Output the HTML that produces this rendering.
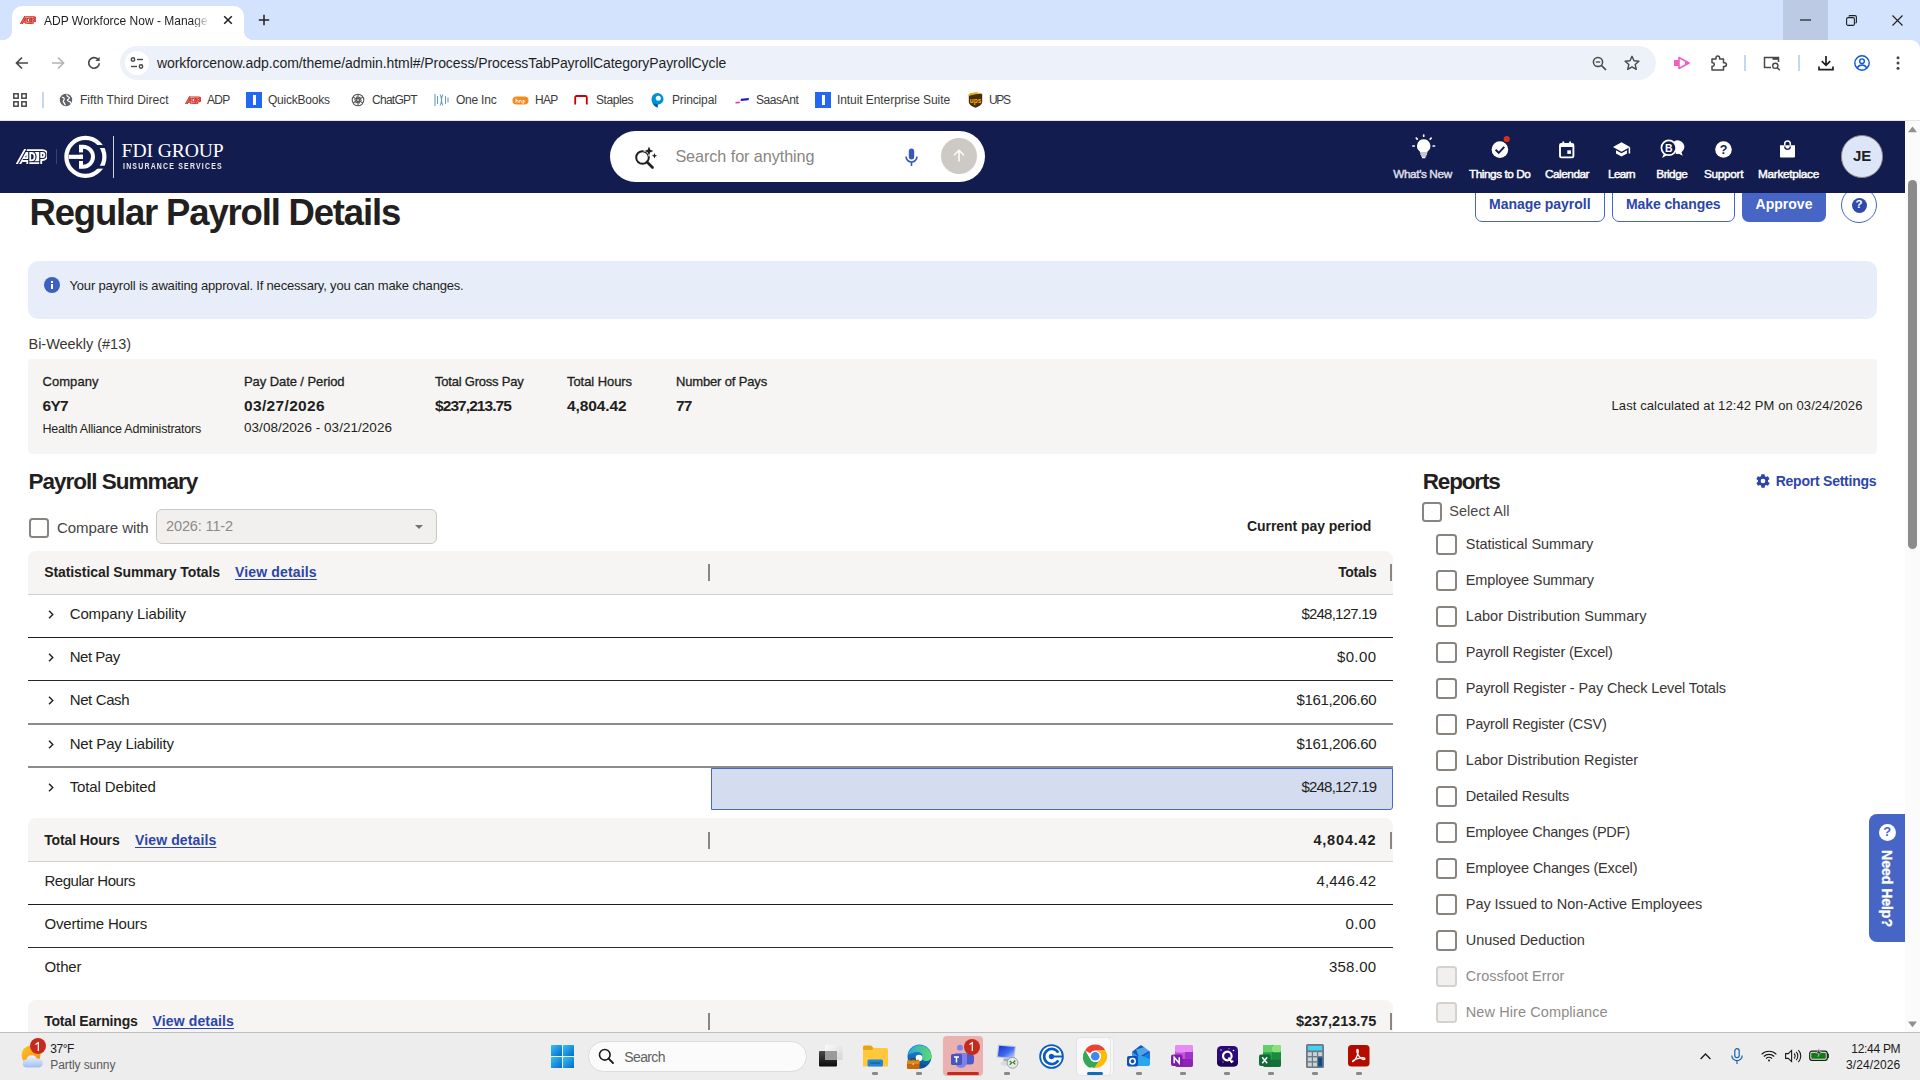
<!DOCTYPE html>
<html lang="en">
<head>
<meta charset="utf-8">
<title>ADP Workforce Now - Manage</title>
<style>
*{box-sizing:border-box;margin:0;padding:0}
html,body{width:1920px;height:1080px;overflow:hidden;background:#fff;font-family:"Liberation Sans",sans-serif;color:#1f1f1f}
.a{position:absolute}
.t{position:absolute;white-space:nowrap;line-height:1}
svg{position:absolute;overflow:visible}
/* ---------- chrome ---------- */
#tabbar{left:0;top:0;width:1920px;height:52px;background:#d3e3fd}
#tab{left:12px;top:6px;width:232px;height:34px;background:#fff;border-radius:10px 10px 0 0}
#tab:before,#tab:after{content:"";position:absolute;bottom:0;width:10px;height:10px}
#tab:before{left:-10px;background:radial-gradient(circle at 0 0,transparent 10px,#fff 10.5px)}
#tab:after{right:-10px;background:radial-gradient(circle at 100% 0,transparent 10px,#fff 10.5px)}
#minhl{left:1783px;top:0;width:45px;height:40px;background:#bccbe3}
#toolbar{left:0;top:40px;width:1920px;height:46px;background:#fff;border-radius:0 9px 0 0}
#url{left:120px;top:46px;width:1536px;height:34px;border-radius:17px;background:#edf2fa}
#bm{left:0;top:86px;width:1920px;height:35px;background:#fff;border-bottom:1px solid #e4e4e4}
.bmt{font-size:12px;color:#3b3b3b;top:94px}
/* ---------- adp header ---------- */
#hd{left:0;top:121px;width:1905px;height:72px;background:#121c4e}
.nav{font-size:11.5px;color:#fff;top:168px;font-weight:bold;letter-spacing:-.2px}
/* ---------- page ---------- */
#page{left:0;top:193px;width:1905px;height:839px;background:#fff;overflow:hidden}
#sb{left:1905px;top:121px;width:15px;height:911px;background:#fbfbfb}
/* ---------- taskbar ---------- */
#tb{left:0;top:1032px;width:1920px;height:48px;background:#ededed;border-top:1px solid #bebebe}
</style>
</head>
<body>
<!-- TABBAR -->
<div class="a" id="tabbar"></div>
<div class="a" id="minhl"></div>
<div class="a" id="tab"></div>
<!-- tab favicon ADP -->
<svg style="left:19.9px;top:15.8px;overflow:hidden" width="16.3" height="8.3" viewBox="0 0 126 61"><g fill="none" stroke-linejoin="round"><path d="M5 69L43 1M40 10H100M51 10V60M27 42H51M51 10H62C86 10 86 51 62 51H51M51 51H95M95 10V64M95 10H106C124 10 124 38 106 38H95" stroke="#d0271d" stroke-width="19"/><path d="M5 69L43 1M40 10H100M51 10V60M27 42H51M51 10H62C86 10 86 51 62 51H51M51 51H95M95 10V64M95 10H106C124 10 124 38 106 38H95" stroke="#fff" stroke-width="3.500" opacity=".75"/></g></svg>
<div class="t" style="left:44px;top:15px;font-size:12px;color:#1f1f1f;width:166px;overflow:hidden;-webkit-mask-image:linear-gradient(90deg,#000 148px,transparent 166px)">ADP Workforce Now - Manage pa</div>
<svg style="left:223px;top:15px" width="10" height="10" viewBox="0 0 10 10"><path d="M1.2 1.2l7.6 7.6M8.8 1.2L1.200 8.800" stroke="#1f1f1f" stroke-width="1.5" fill="none"/></svg>
<svg style="left:258px;top:14px" width="12" height="12" viewBox="0 0 12 12"><path d="M6 .8v10.400M.8 6h10.400" stroke="#1f1f1f" stroke-width="1.500" fill="none"/></svg>
<!-- window controls -->
<svg style="left:1800px;top:19px" width="11" height="2" viewBox="0 0 11 2"><path d="M0 1h11" stroke="#1f1f1f" stroke-width="1.200"/></svg>
<svg style="left:1846px;top:15px" width="11" height="11" viewBox="0 0 11 11"><rect x=".6" y="2.600" width="7.800" height="7.800" rx="1.500" fill="none" stroke="#1f1f1f" stroke-width="1.100"/><path d="M3 1.600V1.500Q3 .6 4 .6h5q1.400 0 1.400 1.400v5q0 1-1 1" fill="none" stroke="#1f1f1f" stroke-width="1.100"/></svg>
<svg style="left:1892px;top:15px" width="11" height="11" viewBox="0 0 11 11"><path d="M.5.5l10 10M10.500.5l-10 10" stroke="#1f1f1f" stroke-width="1.100" fill="none"/></svg>
<!-- TOOLBAR -->
<div class="a" id="toolbar"></div>
<svg style="left:15px;top:56px" width="14" height="14" viewBox="0 0 14 14"><path d="M13 7H2M7 1.500L1.500 7 7 12.500" stroke="#474747" stroke-width="1.700" fill="none"/></svg>
<svg style="left:51px;top:56px" width="14" height="14" viewBox="0 0 14 14"><path d="M1 7h11M7 1.500L12.500 7 7 12.500" stroke="#b4b4b4" stroke-width="1.700" fill="none"/></svg>
<svg style="left:87px;top:56px" width="14" height="14" viewBox="0 0 14 14"><path d="M12.300 7.300A5.300 5.300 0 1 1 10.800 3.200" stroke="#474747" stroke-width="1.700" fill="none"/><path d="M12.600.8v4.200H8.400z" fill="#474747"/></svg>
<div class="a" id="url"></div>
<div class="a" style="left:125px;top:51px;width:24px;height:24px;border-radius:12px;background:#fff"></div>
<svg style="left:130px;top:57px" width="14" height="12" viewBox="0 0 14 12"><circle cx="3" cy="2.500" r="1.700" fill="none" stroke="#474747" stroke-width="1.400"/><path d="M7 2.500h6" stroke="#474747" stroke-width="1.400"/><circle cx="11" cy="9.500" r="1.700" fill="none" stroke="#474747" stroke-width="1.400"/><path d="M1 9.500h6" stroke="#474747" stroke-width="1.400"/></svg>
<div class="t" style="left:157px;top:56px;font-size:14px;color:#1f1f1f;letter-spacing:-.07px">workforcenow.adp.com/theme/admin.html#/Process/ProcessTabPayrollCategoryPayrollCycle</div>
<!-- toolbar right icons -->
<svg style="left:1592px;top:56px" width="15" height="15" viewBox="0 0 15 15"><circle cx="6" cy="6" r="4.600" fill="none" stroke="#474747" stroke-width="1.500"/><path d="M9.500 9.500l4.500 4.500" stroke="#474747" stroke-width="1.700"/><path d="M3.800 6h4.400" stroke="#474747" stroke-width="1.300"/></svg>
<svg style="left:1624px;top:55px" width="16" height="16" viewBox="0 0 16 16"><path d="M8 1.300l2 4.500 4.900.5-3.700 3.300 1.100 4.800L8 11.900l-4.300 2.500 1.100-4.800L1.100 6.300 6 5.800z" fill="none" stroke="#474747" stroke-width="1.400" stroke-linejoin="round"/></svg>
<svg style="left:1673px;top:56px" width="18" height="14" viewBox="0 0 18 14"><rect x="1" y="4" width="5" height="6" fill="#f25fc0"/><path d="M6 1.500l10 5.500L6 12.500z" fill="none" stroke="#f25fc0" stroke-width="1.600" stroke-linejoin="round"/><path d="M12 4.800L16.500 7 12 9.200z" fill="#f25fc0"/></svg>
<svg style="left:1710px;top:54px" width="17" height="17" viewBox="0 0 17 17"><path d="M2 5h4V3.800a1.800 1.800 0 0 1 3.600 0V5h3.900v3.700h1a1.900 1.900 0 0 1 0 3.800h-1V16H2v-3.800h.6a1.700 1.700 0 0 0 0-3.400H2z" fill="none" stroke="#474747" stroke-width="1.500" stroke-linejoin="round"/></svg>
<div class="a" style="left:1744px;top:55px;width:2px;height:16px;background:#c7d7f3"></div>
<svg style="left:1763px;top:55px" width="18" height="16" viewBox="0 0 18 16"><path d="M8 12.500H1.500v-10h14V7" fill="none" stroke="#474747" stroke-width="1.500"/><rect x="9.500" y="2" width="6.500" height="2.800" fill="#474747"/><circle cx="12.300" cy="10.800" r="2.600" fill="none" stroke="#474747" stroke-width="1.400"/><path d="M14.200 12.700l2.600 2.600" stroke="#474747" stroke-width="1.500"/></svg>
<div class="a" style="left:1798px;top:55px;width:2px;height:16px;background:#c7d7f3"></div>
<svg style="left:1818px;top:55px" width="16" height="16" viewBox="0 0 16 16"><path d="M8 1v9M3.800 6.200L8 10.400l4.200-4.200" fill="none" stroke="#1f1f1f" stroke-width="1.700"/><path d="M1 11.500v3.200h14v-3.200" fill="none" stroke="#1f1f1f" stroke-width="1.700"/></svg>
<svg style="left:1854px;top:55px" width="16" height="16" viewBox="0 0 16 16"><circle cx="8" cy="8" r="7.200" fill="none" stroke="#0b57d0" stroke-width="1.400"/><circle cx="8" cy="6.200" r="2.300" fill="none" stroke="#0b57d0" stroke-width="1.400"/><path d="M3.300 12.900c1.200-2.200 3-2.900 4.700-2.900s3.500.7 4.700 2.900" fill="none" stroke="#0b57d0" stroke-width="1.400"/></svg>
<svg style="left:1896px;top:56px" width="4" height="14" viewBox="0 0 4 14"><circle cx="2" cy="1.800" r="1.500" fill="#474747"/><circle cx="2" cy="7" r="1.500" fill="#474747"/><circle cx="2" cy="12.200" r="1.500" fill="#474747"/></svg>
<!-- BOOKMARKS -->
<div class="a" id="bm"></div>
<svg style="left:13px;top:93px" width="14" height="14" viewBox="0 0 14 14"><g fill="none" stroke="#474747" stroke-width="1.500"><rect x=".8" y=".8" width="4.400" height="4.400"/><rect x="8.800" y=".8" width="4.400" height="4.400"/><rect x=".8" y="8.800" width="4.400" height="4.400"/><rect x="8.800" y="8.800" width="4.400" height="4.400"/></g></svg>
<div class="a" style="left:42px;top:92px;width:2px;height:16px;background:#c7d7f3"></div>
<svg style="left:59px;top:93px" width="14" height="14" viewBox="0 0 14 14"><circle cx="7" cy="7" r="6.200" fill="#5f6368"/><path d="M3 4.500c1.500-.5 2.500.5 2.200 1.800S3.500 8 4.500 9s1 2.500 2.200 2.800M8 1.500c-.5 1.500.5 2 1.800 2.500s.2 2-1 2.500.5 2 1.500 2 1.500 1 1 2" stroke="#fff" stroke-width="1.200" fill="none"/></svg>
<div class="t bmt" style="left:80px;letter-spacing:0px">Fifth Third Direct</div>
<svg style="left:185px;top:95.8px;overflow:hidden" width="16" height="8.4" viewBox="0 0 126 61"><g fill="none" stroke-linejoin="round"><path d="M5 69L43 1M40 10H100M51 10V60M27 42H51M51 10H62C86 10 86 51 62 51H51M51 51H95M95 10V64M95 10H106C124 10 124 38 106 38H95" stroke="#d0271d" stroke-width="19"/><path d="M5 69L43 1M40 10H100M51 10V60M27 42H51M51 10H62C86 10 86 51 62 51H51M51 51H95M95 10V64M95 10H106C124 10 124 38 106 38H95" stroke="#fff" stroke-width="3.500" opacity=".75"/></g></svg>
<div class="t bmt" style="left:207px;letter-spacing:-0.66px">ADP</div>
<div class="a" style="left:246px;top:92px;width:16px;height:16px;background:#2368f0"></div><div class="a" style="left:252.500px;top:95px;width:3px;height:10px;background:#fff"></div>
<div class="t bmt" style="left:268px;letter-spacing:-0.23px">QuickBooks</div>
<svg style="left:351px;top:93px" width="14" height="14" viewBox="0 0 14 14"><g fill="none" stroke="#555" stroke-width="1.100"><circle cx="7" cy="7" r="5.800"/><path d="M7 1.200v4.300l3.700 2.100M12 4.100L8.300 6.200v4.300M12 9.900L8.300 7.800 4.600 9.900M7 12.800V8.500L3.300 6.400M2 9.900l3.700-2.100V3.500M2 4.100l3.700 2.100 3.700-2.100"/></g></svg>
<div class="t bmt" style="left:372px;letter-spacing:-0.72px">ChatGPT</div>
<svg style="left:434px;top:93px" width="15" height="14" viewBox="0 0 15 14"><g stroke="#6a9cc0" stroke-width="1.100" fill="none"><path d="M1 1v12M3.500 3v8M6 1.500c2 3 2 8 0 11M9 1.500c-2 3-2 8 0 11M11.500 3v8M14 4.500v5"/></g></svg>
<div class="t bmt" style="left:456px;letter-spacing:-0.23px">One Inc</div>
<svg style="left:512px;top:96px" width="17" height="9" viewBox="0 0 17 9"><rect x=".5" y=".5" width="16" height="8" rx="4" fill="#f58a1f"/><path d="M4 2.500v4M4 4.800c.8-1 2-.6 2 .4v1.300M8 6.500c-1.300 0-1.300-2.200.2-2.200 1 0 1.200.8 1.200 2.200M11 4.300v4M11 4.800c1.600-1.200 2.800 1.600 0 1.600" stroke="#fff" stroke-width=".9" fill="none"/></svg>
<div class="t bmt" style="left:535px;letter-spacing:-0.76px">HAP</div>
<svg style="left:574px;top:95px" width="14" height="10" viewBox="0 0 14 10"><path d="M1.200 9.500V2.500Q1.200 1 2.700 1h8.600q1.500 0 1.500 1.500v7" fill="none" stroke="#cc0000" stroke-width="1.800"/></svg>
<div class="t bmt" style="left:596px;letter-spacing:-0.43px">Staples</div>
<svg style="left:650px;top:92px" width="15" height="16" viewBox="0 0 15 16"><path d="M7.500 1A6 6 0 0 1 13.500 7c0 3.300-2.700 5.500-5.800 5.500V15.500C4 14.500 1.500 11 1.500 7A6 6 0 0 1 7.500 1z" fill="#0091da"/><circle cx="8.300" cy="6.300" r="2.500" fill="#fff"/><path d="M3 11c1 2.500 2.500 4 4.700 4.500V12c-2 0-3.700-.3-4.700-1z" fill="#0061a0"/></svg>
<div class="t bmt" style="left:672px;letter-spacing:-0.15px">Principal</div>
<svg style="left:735px;top:97px" width="15" height="7" viewBox="0 0 15 7"><path d="M6 1.800l8-.8-.5 2.300-8 .8z" fill="#1d1bb0"/><path d="M.5 5l4.500-.5-.4 1.800L.5 6.500z" fill="#e72fb0"/></svg>
<div class="t bmt" style="left:756px;letter-spacing:-0.44px">SaasAnt</div>
<div class="a" style="left:815px;top:92px;width:16px;height:16px;background:#2368f0"></div><div class="a" style="left:821.500px;top:95px;width:3px;height:10px;background:#fff"></div>
<div class="t bmt" style="left:837px;letter-spacing:-0.075px">Intuit Enterprise Suite</div>
<svg style="left:968px;top:92px" width="15" height="16" viewBox="0 0 15 16"><path d="M.8 2.200C5 .3 10 .3 14.200 2.200V9.500c0 3.300-3.200 5-6.700 6.200C4 14.500.8 12.800.8 9.500z" fill="#4a2c0f"/><path d="M.8 4c4-1.800 9-2 13.400-2.200V2.200C10 .3 5 .3.8 2.200z" fill="#f6b500"/><text x="7.500" y="11" font-family="Liberation Sans" font-weight="bold" font-size="6.500" fill="#f6b500" text-anchor="middle">ups</text></svg>
<div class="t bmt" style="left:989px;letter-spacing:-1.3px">UPS</div>
<!-- ADP HEADER -->
<div class="a" id="hd"></div>
<svg style="left:15.500px;top:148.750px;overflow:hidden" width="31.500" height="15.250" viewBox="0 0 126 61"><g fill="none" stroke-linejoin="round"><path d="M5 69L43 1M40 10H100M51 10V60M27 42H51M51 10H62C86 10 86 51 62 51H51M51 51H95M95 10V64M95 10H106C124 10 124 38 106 38H95" stroke="#fff" stroke-width="19"/><path d="M5 69L43 1M40 10H100M51 10V60M27 42H51M51 10H62C86 10 86 51 62 51H51M51 51H95M95 10V64M95 10H106C124 10 124 38 106 38H95" stroke="#121c4e" stroke-width="4.500"/></g></svg>
<div class="a" style="left:56px;top:149px;width:1px;height:15px;background:#3a436f"></div>
<svg style="left:64px;top:135px" width="43" height="44" viewBox="64 135 43 44"><circle cx="85.400" cy="156.900" r="19" fill="none" stroke="#fff" stroke-width="4.200"/><rect x="96" y="145" width="12" height="3" fill="#121c4e"/><rect x="96" y="165.750" width="12" height="2.900" fill="#121c4e"/><path fill="#fff" fill-rule="evenodd" d="M79 144.750H83A12 12 0 0 1 83 168.750H79z M83 148.750A8 8 0 0 1 83 164.750z"/><rect x="78.500" y="152.400" width="5" height="2.350" fill="#121c4e"/><rect x="78.500" y="158.900" width="5" height="2.100" fill="#121c4e"/><rect x="68.750" y="154.750" width="14.250" height="4.150" fill="#fff"/></svg>
<div class="a" style="left:113px;top:136px;width:1px;height:42px;background:#cfd1de"></div>
<div class="t" style="top:140.70px;font-size:19.6px;left:121.60px;letter-spacing:-0.102px;color:#fff;font-family:'Liberation Serif',serif;">FDI GROUP</div>
<div class="t" style="top:162.15px;font-size:8.7px;left:122.50px;letter-spacing:1.501px;font-weight:bold;color:#e8e9f0;transform:scaleX(.8);transform-origin:0 0;">INSURANCE SERVICES</div>
<div class="a" style="left:610px;top:131px;width:375px;height:51px;border-radius:26px;background:#fff"></div>
<svg style="left:634px;top:146px" width="24" height="24" viewBox="0 0 24 24"><circle cx="8.500" cy="11.500" r="6.300" fill="none" stroke="#231f20" stroke-width="2"/><path d="M13 16l5.500 5.500" stroke="#231f20" stroke-width="2.600" stroke-linecap="round"/><path d="M15 .5l1.300 3.200 3.200 1.300-3.200 1.300L15 9.500l-1.300-3.200L10.500 5l3.200-1.300z" fill="#231f20" stroke="#fff" stroke-width="1.200" paint-order="stroke"/><path d="M20.500 7l.8 1.900 1.900.8-1.900.8-.8 1.900-.8-1.900-1.900-.8 1.900-.8z" fill="#231f20"/></svg>
<div class="t" style="top:148.40px;font-size:16.2px;left:675.40px;letter-spacing:-0.068px;color:#8a8580;">Search for anything</div>
<svg style="left:905px;top:148px" width="13" height="19" viewBox="0 0 13 19"><rect x="3.800" y="0.500" width="5.400" height="11" rx="2.700" fill="#3b57b7"/><path d="M1 8.500a5.500 5.500 0 0 0 11 0M6.500 14v4" fill="none" stroke="#3b57b7" stroke-width="1.600"/></svg>
<div class="a" style="left:941px;top:137.500px;width:36px;height:36px;border-radius:18px;background:#cdc9c4"></div>
<svg style="left:953px;top:149px" width="12" height="13" viewBox="0 0 12 13"><path d="M6 12.500V1.500M1 6.300L6 1.300l5 5" fill="none" stroke="#fff" stroke-width="1.500"/></svg>
<svg style="left:1412px;top:134px" width="24" height="25" viewBox="0 0 24 25"><path d="M11.700 5.300a6.700 6.700 0 0 1 3.800 12.200v1.300h-7.600v-1.300A6.700 6.700 0 0 1 11.700 5.300z" fill="#fff"/><path d="M8.300 20h6.800M9 21.800h5.400M10 23.500h3.400" stroke="#fff" stroke-width="1.300"/><g stroke="#fff" stroke-width="1.700" stroke-linecap="round"><path d="M11.700 1v1.200M4.300 4.200l.9.900M19.100 4.200l-.9.900M.9 12h1.300M21.200 12h1.300"/></g></svg>
<svg style="left:1490px;top:134px" width="24" height="25" viewBox="0 0 24 25"><circle cx="9.900" cy="15.600" r="8.300" fill="#fff"/><path d="M5.600 15.800l3.100 3 5.600-6" fill="none" stroke="#121c4e" stroke-width="1.900"/><circle cx="16.700" cy="5" r="3.700" fill="#d6301c" stroke="#121c4e" stroke-width="1.200"/></svg>
<svg style="left:1559px;top:141px" width="16" height="18" viewBox="0 0 16 18"><rect x="1" y="2.900" width="13.400" height="13.500" rx="1.300" fill="none" stroke="#fff" stroke-width="1.900"/><path d="M1 4.500h13.400" stroke="#fff" stroke-width="3"/><path d="M4.300.6v3M11.100.6v3" stroke="#fff" stroke-width="1.900"/><rect x="8.300" y="9.300" width="3.600" height="3.600" fill="#fff"/></svg>
<svg style="left:1613px;top:142px" width="19" height="16" viewBox="0 0 19 16"><path d="M8.500.3L17 5 8.500 9.700 0 5z" fill="#fff"/><path d="M3 8.200v3.200L8.500 14.500 14 11.400V8.200L8.500 11.300z" fill="#fff"/><path d="M16.400 5.300v6.200" stroke="#fff" stroke-width="1.500"/></svg>
<svg style="left:1660px;top:139px" width="24" height="20" viewBox="0 0 24 20"><path d="M14 2.500a6.500 6.500 0 0 1 7.500 10.800l1.200 3.400-3.800-1.900a6.500 6.500 0 0 1-3 .2" fill="#fff"/><circle cx="8.800" cy="8.800" r="7.400" fill="#121c4e" stroke="#fff" stroke-width="1.700"/><path d="M4 14.500L2 19l5-2.800" fill="#fff"/><text x="8.800" y="12.700" font-family="Liberation Sans" font-weight="bold" font-size="10.500" fill="#fff" text-anchor="middle">B</text></svg>
<svg style="left:1715px;top:141px" width="17" height="17" viewBox="0 0 17 17"><circle cx="8.500" cy="8.500" r="8.300" fill="#fff"/><text x="8.500" y="13" font-family="Liberation Sans" font-weight="bold" font-size="12.500" fill="#121c4e" text-anchor="middle">?</text></svg>
<svg style="left:1780px;top:140px" width="15" height="18" viewBox="0 0 15 18"><path d="M0 5.300h15v11.200q0 1-1 1H1q-1 0-1-1z" fill="#fff"/><path d="M4.700 5V3.800a2.800 2.800 0 0 1 5.600 0V5" fill="none" stroke="#fff" stroke-width="1.500"/><path d="M4.700 6.500a2.800 2.800 0 0 0 5.600 0" fill="none" stroke="#121c4e" stroke-width="1.300"/></svg>
<div class="t" style="top:169.10px;font-size:11.8px;left:1393.20px;letter-spacing:-0.398px;color:#dedee6;-webkit-text-stroke-width:.45px;">What's New</div>
<div class="t" style="top:169.10px;font-size:11.8px;left:1469.00px;letter-spacing:-0.467px;color:#fff;-webkit-text-stroke-width:.45px;">Things to Do</div>
<div class="t" style="top:169.10px;font-size:11.8px;left:1545.00px;letter-spacing:-0.486px;color:#fff;-webkit-text-stroke-width:.45px;">Calendar</div>
<div class="t" style="top:169.10px;font-size:11.8px;left:1608.00px;letter-spacing:-0.636px;color:#fff;-webkit-text-stroke-width:.45px;">Learn</div>
<div class="t" style="top:169.10px;font-size:11.8px;left:1656.30px;letter-spacing:-0.535px;color:#fff;-webkit-text-stroke-width:.45px;">Bridge</div>
<div class="t" style="top:169.10px;font-size:11.8px;left:1704.00px;letter-spacing:-0.304px;color:#fff;-webkit-text-stroke-width:.45px;">Support</div>
<div class="t" style="top:169.10px;font-size:11.8px;left:1758.00px;letter-spacing:-0.297px;color:#fff;-webkit-text-stroke-width:.45px;">Marketplace</div>
<div class="a" style="left:1840.500px;top:135.300px;width:42.400px;height:42.400px;border-radius:22px;background:#dce6f8;border:1.500px solid #8c8681"></div>
<div class="t" style="top:148.20px;font-size:15px;left:1852.90px;letter-spacing:-0.074px;font-weight:bold;color:#231f20;">JE</div>
<!-- PAGE -->
<div class="a" id="page">
<div class="t" style="top:1.65px;font-size:36.5px;left:29.50px;letter-spacing:-1.178px;font-weight:bold;color:#231f20;">Regular Payroll Details</div>
<div class="a" style="left:1475px;top:-7.00px;width:130px;height:36px;border:1px solid #4765c5;border-radius:7px;background:#fff"></div>
<div class="t" style="top:4.40px;font-size:14px;left:1489.00px;letter-spacing:-0.030px;font-weight:bold;color:#2c45a8;">Manage payroll</div>
<div class="a" style="left:1612px;top:-7.00px;width:123px;height:36px;border:1px solid #4765c5;border-radius:7px;background:#fff"></div>
<div class="t" style="top:4.40px;font-size:14px;left:1626.00px;letter-spacing:-0.101px;font-weight:bold;color:#2c45a8;">Make changes</div>
<div class="a" style="left:1742px;top:-7.00px;width:84px;height:36px;border-radius:7px;background:#4765c5"></div>
<div class="t" style="top:4.40px;font-size:14px;left:1755.50px;letter-spacing:0.031px;font-weight:bold;color:#fff;">Approve</div>
<div class="a" style="left:1841px;top:-6.00px;width:36px;height:36px;border:1px solid #4765c5;border-radius:18px;background:#fff"></div>
<div class="a" style="left:1851.5px;top:4.50px;width:15px;height:15px;border-radius:8px;background:#2f49ad"></div>
<div class="t" style="top:5.95px;font-size:11.5px;left:1855.60px;font-weight:bold;color:#fff;">?</div>
<div class="a" style="left:28px;top:68.00px;width:1849px;height:58px;border-radius:10px;background:#e8eef9"></div>
<div class="a" style="left:43.5px;top:84.00px;width:16px;height:16px;border-radius:8px;background:#3f5fc2"></div>
<div class="a" style="left:50.5px;top:87.50px;width:2.1px;height:2px;background:#fff"></div>
<div class="a" style="left:50.5px;top:90.60px;width:2.1px;height:5.8px;background:#fff"></div>
<div class="t" style="top:86.20px;font-size:13px;left:69.50px;letter-spacing:-0.183px;color:#231f20;">Your payroll is awaiting approval. If necessary, you can make changes.</div>
<div class="t" style="top:143.75px;font-size:14.5px;left:28.50px;letter-spacing:-0.025px;color:#3a3634;">Bi-Weekly (#13)</div>
<div class="a" style="left:28px;top:166.00px;width:1849px;height:95px;border-radius:4px;background:#f6f5f4"></div>
<div class="t" style="top:181.70px;font-size:13px;left:42.50px;letter-spacing:0.052px;color:#231f20;-webkit-text-stroke-width:.3px;">Company</div>
<div class="t" style="top:204.55px;font-size:15.5px;left:42.50px;letter-spacing:-0.693px;font-weight:bold;color:#231f20;">6Y7</div>
<div class="t" style="top:230.05px;font-size:12.5px;left:42.50px;letter-spacing:-0.229px;color:#231f20;">Health Alliance Administrators</div>
<div class="t" style="top:181.70px;font-size:13px;left:244.00px;letter-spacing:-0.082px;color:#231f20;-webkit-text-stroke-width:.3px;">Pay Date / Period</div>
<div class="t" style="top:204.55px;font-size:15.5px;left:244.00px;letter-spacing:0.342px;font-weight:bold;color:#231f20;">03/27/2026</div>
<div class="t" style="top:227.55px;font-size:13.5px;left:244.00px;letter-spacing:0.038px;color:#231f20;">03/08/2026 - 03/21/2026</div>
<div class="t" style="top:181.70px;font-size:13px;left:435.00px;letter-spacing:-0.217px;color:#231f20;-webkit-text-stroke-width:.3px;">Total Gross Pay</div>
<div class="t" style="top:204.55px;font-size:15.5px;left:435.00px;letter-spacing:-0.927px;font-weight:bold;color:#231f20;">$237,213.75</div>
<div class="t" style="top:181.70px;font-size:13px;left:567.00px;letter-spacing:-0.068px;color:#231f20;-webkit-text-stroke-width:.3px;">Total Hours</div>
<div class="t" style="top:204.55px;font-size:15.5px;left:567.00px;letter-spacing:-0.104px;font-weight:bold;color:#231f20;">4,804.42</div>
<div class="t" style="top:181.70px;font-size:13px;left:676.00px;letter-spacing:-0.157px;color:#231f20;-webkit-text-stroke-width:.3px;">Number of Pays</div>
<div class="t" style="top:204.55px;font-size:15.5px;left:676.00px;letter-spacing:-0.870px;font-weight:bold;color:#231f20;">77</div>
<div class="t" style="top:205.70px;font-size:13px;left:1611.50px;letter-spacing:0.093px;color:#231f20;">Last calculated at 12:42 PM on 03/24/2026</div>
<div class="t" style="top:278.05px;font-size:22.5px;left:28.50px;letter-spacing:-1.009px;font-weight:bold;color:#231f20;">Payroll Summary</div>
<div class="a" style="left:28.5px;top:324.50px;width:20.5px;height:20.5px;border:2px solid #8a8481;border-radius:3.500px;background:#fff"></div>
<div class="t" style="top:327.20px;font-size:15px;left:57.00px;letter-spacing:-0.086px;color:#444;">Compare with</div>
<div class="a" style="left:156px;top:316.00px;width:281px;height:35px;border:1px solid #cbc7c3;border-radius:6px;background:#f1f0ee"></div>
<div class="t" style="top:326.45px;font-size:14.5px;left:166.00px;letter-spacing:-0.126px;color:#8e8a87;">2026: 11-2</div>
<svg style="left:415px;top:331.5px" width="8" height="4" viewBox="0 0 8 4"><path d="M0 0h8L4 4z" fill="#77726f"/></svg>
<div class="t" style="top:326.20px;font-size:14px;left:1247.00px;letter-spacing:-0.058px;font-weight:bold;color:#231f20;">Current pay period</div>
<div class="a" style="left:28px;top:358.00px;width:1365px;height:44px;border-radius:8px 8px 0 0;background:#f6f5f4;border-bottom:1px solid #d2cfcc"></div>
<div class="t" style="top:372.40px;font-size:14px;left:44.20px;letter-spacing:-0.081px;font-weight:bold;color:#231f20;">Statistical Summary Totals</div>
<div class="t" style="top:372.40px;font-size:14px;left:235.00px;letter-spacing:0.159px;font-weight:bold;color:#2c45a8;text-decoration:underline;text-underline-offset:2px;">View details</div>
<div class="a" style="left:708px;top:371.00px;width:2px;height:17px;background:#8a8582"></div>
<div class="a" style="left:1390px;top:371.00px;width:2px;height:17px;background:#8a8582"></div>
<div class="t" style="top:372.40px;font-size:14px;left:1338.20px;letter-spacing:-0.331px;font-weight:bold;color:#231f20;">Totals</div>
<div class="a" style="left:28px;top:444.00px;width:1365px;height:1px;background:#1f1b1a"></div>
<div class="a" style="left:28px;top:487.00px;width:1365px;height:1px;background:#2b2726"></div>
<div class="a" style="left:28px;top:530.00px;width:1365px;height:2px;background:#8d8a88"></div>
<div class="a" style="left:28px;top:573.00px;width:1365px;height:2px;background:#8d8a88"></div>
<div class="a" style="left:711px;top:575.00px;width:682px;height:42px;background:#d4dcf0;border:1px solid #4a67c6;border-radius:0 0 3px 0"></div>
<svg style="left:48px;top:416.80px" width="6" height="9" viewBox="0 0 6 9"><path d="M1 .8l3.800 3.700L1 8.200" fill="none" stroke="#231f20" stroke-width="1.400"/></svg>
<div class="t" style="top:413.20px;font-size:15px;left:69.70px;letter-spacing:-0.123px;color:#231f20;">Company Liability</div>
<div class="t" style="top:413.20px;font-size:15px;left:1301.40px;letter-spacing:-0.765px;color:#231f20;">$248,127.19</div>
<svg style="left:48px;top:459.80px" width="6" height="9" viewBox="0 0 6 9"><path d="M1 .8l3.800 3.700L1 8.200" fill="none" stroke="#231f20" stroke-width="1.400"/></svg>
<div class="t" style="top:456.20px;font-size:15px;left:69.70px;letter-spacing:-0.480px;color:#231f20;">Net Pay</div>
<div class="t" style="top:456.20px;font-size:15px;left:1336.90px;letter-spacing:0.393px;color:#231f20;">$0.00</div>
<svg style="left:48px;top:502.80px" width="6" height="9" viewBox="0 0 6 9"><path d="M1 .8l3.800 3.700L1 8.200" fill="none" stroke="#231f20" stroke-width="1.400"/></svg>
<div class="t" style="top:499.20px;font-size:15px;left:69.70px;letter-spacing:-0.378px;color:#231f20;">Net Cash</div>
<div class="t" style="top:499.20px;font-size:15px;left:1296.40px;letter-spacing:-0.311px;color:#231f20;">$161,206.60</div>
<svg style="left:48px;top:546.50px" width="6" height="9" viewBox="0 0 6 9"><path d="M1 .8l3.800 3.700L1 8.200" fill="none" stroke="#231f20" stroke-width="1.400"/></svg>
<div class="t" style="top:542.90px;font-size:15px;left:69.70px;letter-spacing:-0.209px;color:#231f20;">Net Pay Liability</div>
<div class="t" style="top:542.90px;font-size:15px;left:1296.40px;letter-spacing:-0.311px;color:#231f20;">$161,206.60</div>
<svg style="left:48px;top:589.80px" width="6" height="9" viewBox="0 0 6 9"><path d="M1 .8l3.800 3.700L1 8.200" fill="none" stroke="#231f20" stroke-width="1.400"/></svg>
<div class="t" style="top:586.20px;font-size:15px;left:69.70px;letter-spacing:-0.120px;color:#231f20;">Total Debited</div>
<div class="t" style="top:586.20px;font-size:15px;left:1301.40px;letter-spacing:-0.765px;color:#231f20;">$248,127.19</div>
<div class="a" style="left:28px;top:625.00px;width:1365px;height:43.5px;border-radius:8px 8px 0 0;background:#f6f5f4;border-bottom:1px solid #d2cfcc"></div>
<div class="t" style="top:640.10px;font-size:14px;left:44.20px;letter-spacing:-0.122px;font-weight:bold;color:#231f20;">Total Hours</div>
<div class="t" style="top:640.10px;font-size:14px;left:135.00px;letter-spacing:0.126px;font-weight:bold;color:#2c45a8;text-decoration:underline;text-underline-offset:2px;">View details</div>
<div class="a" style="left:708px;top:638.70px;width:2px;height:17px;background:#8a8582"></div>
<div class="a" style="left:1390px;top:638.70px;width:2px;height:17px;background:#8a8582"></div>
<div class="t" style="top:639.85px;font-size:14.5px;left:1313.40px;letter-spacing:0.820px;font-weight:bold;color:#231f20;">4,804.42</div>
<div class="a" style="left:28px;top:711.00px;width:1365px;height:1px;background:#1f1b1a"></div>
<div class="a" style="left:28px;top:754.00px;width:1365px;height:1px;background:#2f2b2a"></div>
<div class="t" style="top:680.40px;font-size:15px;left:44.50px;letter-spacing:-0.478px;color:#231f20;">Regular Hours</div>
<div class="t" style="top:680.40px;font-size:15px;left:1316.40px;letter-spacing:0.201px;color:#231f20;">4,446.42</div>
<div class="t" style="top:723.20px;font-size:15px;left:44.50px;letter-spacing:-0.180px;color:#231f20;">Overtime Hours</div>
<div class="t" style="top:723.20px;font-size:15px;left:1345.40px;letter-spacing:0.451px;color:#231f20;">0.00</div>
<div class="t" style="top:766.20px;font-size:15px;left:44.50px;letter-spacing:-0.103px;color:#231f20;">Other</div>
<div class="t" style="top:766.20px;font-size:15px;left:1328.90px;letter-spacing:0.270px;color:#231f20;">358.00</div>
<div class="a" style="left:28px;top:806.50px;width:1365px;height:44px;border-radius:8px 8px 0 0;background:#f6f5f4;border-bottom:1px solid #d2cfcc"></div>
<div class="t" style="top:821.10px;font-size:14px;left:44.20px;letter-spacing:-0.200px;font-weight:bold;color:#231f20;">Total Earnings</div>
<div class="t" style="top:821.10px;font-size:14px;left:152.60px;letter-spacing:0.126px;font-weight:bold;color:#2c45a8;text-decoration:underline;text-underline-offset:2px;">View details</div>
<div class="a" style="left:708px;top:819.70px;width:2px;height:17px;background:#8a8582"></div>
<div class="a" style="left:1390px;top:819.70px;width:2px;height:17px;background:#8a8582"></div>
<div class="t" style="top:820.85px;font-size:14.5px;left:1295.90px;letter-spacing:-0.012px;font-weight:bold;color:#231f20;">$237,213.75</div>
<div class="t" style="top:278.15px;font-size:22.5px;left:1422.80px;letter-spacing:-1.173px;font-weight:bold;color:#231f20;">Reports</div>
<svg style="left:1754.700px;top:280.3px" width="16" height="16" viewBox="0 0 24 24"><path fill="#2c45a8" d="M19.400 13c.04-.3.06-.7.06-1s-.02-.7-.06-1l2.100-1.700c.2-.15.250-.4.100-.65l-2-3.450c-.120-.220-.4-.3-.600-.220l-2.500 1c-.5-.4-1.100-.700-1.700-1l-.4-2.600c-.03-.250-.250-.4-.5-.4h-4c-.250 0-.460.180-.5.400l-.4 2.650c-.600.250-1.150.600-1.700 1l-2.500-1c-.220-.08-.5 0-.600.220l-2 3.450c-.120.220-.07.5.120.650L4.570 11c-.04.300-.07.650-.07 1s.03.650.07 1l-2.100 1.650c-.200.150-.250.420-.120.640l2 3.460c.120.220.4.300.600.220l2.500-1c.500.400 1.100.730 1.700.980l.400 2.650c.03.240.240.400.500.400h4c.250 0 .460-.180.500-.420l.400-2.650c.600-.250 1.150-.580 1.700-.980l2.500 1c.220.080.500 0 .600-.220l2-3.460c.120-.220.070-.490-.120-.640zM12 15.500A3.500 3.500 0 1 1 12 8.500a3.500 3.500 0 0 1 0 7z"/></svg>
<div class="t" style="top:280.70px;font-size:14px;left:1775.70px;letter-spacing:-0.235px;font-weight:bold;color:#2c45a8;">Report Settings</div>
<div class="a" style="left:1422px;top:308.80px;width:20px;height:20px;border:2px solid #8a8481;border-radius:3.500px;background:#fff"></div>
<div class="t" style="top:310.85px;font-size:14.5px;left:1449.20px;letter-spacing:0.076px;color:#4a4644;">Select All</div>
<div class="a" style="left:1436.4px;top:341.30px;width:20.4px;height:20.4px;border:2px solid #8a8481;border-radius:3.500px;background:#fff"></div>
<div class="t" style="top:343.65px;font-size:14.5px;left:1465.80px;letter-spacing:-0.038px;color:#3a3634;">Statistical Summary</div>
<div class="a" style="left:1436.4px;top:377.30px;width:20.4px;height:20.4px;border:2px solid #8a8481;border-radius:3.500px;background:#fff"></div>
<div class="t" style="top:379.65px;font-size:14.5px;left:1465.80px;letter-spacing:-0.159px;color:#3a3634;">Employee Summary</div>
<div class="a" style="left:1436.4px;top:413.30px;width:20.4px;height:20.4px;border:2px solid #8a8481;border-radius:3.500px;background:#fff"></div>
<div class="t" style="top:415.65px;font-size:14.5px;left:1465.80px;letter-spacing:0.038px;color:#3a3634;">Labor Distribution Summary</div>
<div class="a" style="left:1436.4px;top:449.30px;width:20.4px;height:20.4px;border:2px solid #8a8481;border-radius:3.500px;background:#fff"></div>
<div class="t" style="top:451.65px;font-size:14.5px;left:1465.80px;letter-spacing:-0.191px;color:#3a3634;">Payroll Register (Excel)</div>
<div class="a" style="left:1436.4px;top:485.30px;width:20.4px;height:20.4px;border:2px solid #8a8481;border-radius:3.500px;background:#fff"></div>
<div class="t" style="top:487.65px;font-size:14.5px;left:1465.80px;letter-spacing:-0.136px;color:#3a3634;">Payroll Register - Pay Check Level Totals</div>
<div class="a" style="left:1436.4px;top:521.30px;width:20.4px;height:20.4px;border:2px solid #8a8481;border-radius:3.500px;background:#fff"></div>
<div class="t" style="top:523.65px;font-size:14.5px;left:1465.80px;letter-spacing:-0.234px;color:#3a3634;">Payroll Register (CSV)</div>
<div class="a" style="left:1436.4px;top:557.30px;width:20.4px;height:20.4px;border:2px solid #8a8481;border-radius:3.500px;background:#fff"></div>
<div class="t" style="top:559.65px;font-size:14.5px;left:1465.80px;letter-spacing:0.027px;color:#3a3634;">Labor Distribution Register</div>
<div class="a" style="left:1436.4px;top:593.30px;width:20.4px;height:20.4px;border:2px solid #8a8481;border-radius:3.500px;background:#fff"></div>
<div class="t" style="top:595.65px;font-size:14.5px;left:1465.80px;letter-spacing:-0.149px;color:#3a3634;">Detailed Results</div>
<div class="a" style="left:1436.4px;top:629.30px;width:20.4px;height:20.4px;border:2px solid #8a8481;border-radius:3.500px;background:#fff"></div>
<div class="t" style="top:631.65px;font-size:14.5px;left:1465.80px;letter-spacing:-0.238px;color:#3a3634;">Employee Changes (PDF)</div>
<div class="a" style="left:1436.4px;top:665.30px;width:20.4px;height:20.4px;border:2px solid #8a8481;border-radius:3.500px;background:#fff"></div>
<div class="t" style="top:667.65px;font-size:14.5px;left:1465.80px;letter-spacing:-0.175px;color:#3a3634;">Employee Changes (Excel)</div>
<div class="a" style="left:1436.4px;top:701.30px;width:20.4px;height:20.4px;border:2px solid #8a8481;border-radius:3.500px;background:#fff"></div>
<div class="t" style="top:703.65px;font-size:14.5px;left:1465.80px;letter-spacing:-0.063px;color:#3a3634;">Pay Issued to Non-Active Employees</div>
<div class="a" style="left:1436.4px;top:737.30px;width:20.4px;height:20.4px;border:2px solid #8a8481;border-radius:3.500px;background:#fff"></div>
<div class="t" style="top:739.65px;font-size:14.5px;left:1465.80px;letter-spacing:-0.019px;color:#3a3634;">Unused Deduction</div>
<div class="a" style="left:1436.4px;top:773.30px;width:20.4px;height:20.4px;border:2px solid #d5d1ce;border-radius:3.500px;background:#f1f0ee"></div>
<div class="t" style="top:775.65px;font-size:14.5px;left:1465.80px;letter-spacing:0.020px;color:#8f8b88;">Crossfoot Error</div>
<div class="a" style="left:1436.4px;top:809.30px;width:20.4px;height:20.4px;border:2px solid #d5d1ce;border-radius:3.500px;background:#f1f0ee"></div>
<div class="t" style="top:811.65px;font-size:14.5px;left:1465.80px;letter-spacing:0.089px;color:#8f8b88;">New Hire Compliance</div>
<div class="a" style="left:1869px;top:621.00px;width:36px;height:127.8px;border-radius:8px 0 0 8px;background:#4765c5"></div>
<div class="a" style="left:1878.5px;top:630.50px;width:17px;height:17px;border-radius:9px;background:#fff"></div>
<div class="t" style="top:632.20px;font-size:13px;left:1883.20px;font-weight:bold;color:#4765c5;">?</div>
<div class="t" style="left:1887px;top:695.6px;width:0;height:0"><div class="t" style="left:-38px;top:-7.500px;width:76px;text-align:center;font-size:14.200px;font-weight:bold;color:#fff;transform:rotate(90deg);letter-spacing:-.12px;-webkit-text-stroke-width:.3px">Need Help?</div></div>
</div>
<div class="a" id="sb"></div>
<svg style="left:1908px;top:126.200px" width="9" height="6.300" viewBox="0 0 9 6"><path d="M0 6L4.500 .3 9 6z" fill="#8f8f8f"/></svg>
<svg style="left:1908px;top:1021px" width="9" height="7" viewBox="0 0 9 6"><path d="M0 0L4.500 5.700 9 0z" fill="#8f8f8f"/></svg>
<div class="a" style="left:1908px;top:179.500px;width:9px;height:369.500px;border-radius:4.500px;background:#8b8b8b"></div>
<!-- TASKBAR -->
<div class="a" id="tb"></div>
<svg style="left:20px;top:1041.500px" width="26" height="27" viewBox="0 0 26 27"><defs><linearGradient id="sun" x1="0" y1="0" x2="1" y2="1"><stop offset="0" stop-color="#ffc52e"/><stop offset="1" stop-color="#f58a0b"/></linearGradient><linearGradient id="cl" x1="0" y1="0" x2="0" y2="1"><stop offset="0" stop-color="#eef4ff"/><stop offset="1" stop-color="#9fc0f0"/></linearGradient></defs><circle cx="11" cy="13" r="9.500" fill="url(#sun)"/><path d="M7 25.500a4 4 0 0 1-.5-8 5.500 5.500 0 0 1 10.400-.8A4.500 4.500 0 0 1 19.500 25.500z" fill="url(#cl)"/></svg>
<div class="a" style="left:30px;top:1038px;width:16px;height:16px;border-radius:8px;background:#c42b1c"></div>
<svg style="left:35px;top:1041.500px" width="5" height="9" viewBox="0 0 5 9"><path d="M.5 2.500L3.300.6V9" fill="none" stroke="#fff" stroke-width="1.200"/></svg>
<div class="t" style="top:1043.30px;font-size:12px;left:50.30px;letter-spacing:-0.494px;color:#1a1a1a;">37°F</div>
<div class="t" style="top:1058.60px;font-size:12px;left:50.30px;letter-spacing:-0.086px;color:#5a5a5a;">Partly sunny</div>
<svg style="left:551px;top:1045px" width="23" height="23" viewBox="0 0 23 23"><defs><linearGradient id="win" x1="0" y1="0" x2="1" y2="1"><stop offset="0" stop-color="#35c1f7"/><stop offset="1" stop-color="#0669c9"/></linearGradient></defs><g fill="url(#win)"><rect x="0" y="0" width="11" height="11" rx=".6"/><rect x="12" y="0" width="11" height="11" rx=".6"/><rect x="0" y="12" width="11" height="11" rx=".6"/><rect x="12" y="12" width="11" height="11" rx=".6"/></g></svg>
<div class="a" style="left:587.5px;top:1040.5px;width:219px;height:31px;border-radius:15.500px;background:#fbfbfb;border:1px solid #dcdcdc"></div>
<svg style="left:598px;top:1048px" width="16" height="16" viewBox="0 0 16 16"><circle cx="6.800" cy="6.800" r="5.300" fill="none" stroke="#1a1a1a" stroke-width="1.600"/><path d="M10.600 10.600l4.400 4.400" stroke="#1a1a1a" stroke-width="1.800" stroke-linecap="round"/></svg>
<div class="t" style="top:1049.90px;font-size:14px;left:624.30px;letter-spacing:-0.643px;color:#5f5f5f;">Search</div>
<svg style="left:818px;top:1045px" width="25" height="22" viewBox="0 0 25 22"><defs><linearGradient id="tv1" x1="0" y1="0" x2="0" y2="1"><stop offset="0" stop-color="#4a4a4a"/><stop offset="1" stop-color="#0c0c0c"/></linearGradient><linearGradient id="tv2" x1="0" y1="0" x2="1" y2="1"><stop offset="0" stop-color="#ffffff"/><stop offset="1" stop-color="#d0d0d0"/></linearGradient></defs><rect x="1" y="6" width="18" height="15.500" rx="1" fill="url(#tv1)"/><rect x="7" y="0" width="17.500" height="15" rx="1" fill="url(#tv2)" opacity=".85"/><rect x="7" y="6" width="12" height="9" fill="#9a9a9a"/></svg>
<svg style="left:862.500px;top:1045px" width="25" height="22" viewBox="0 0 25 22"><path d="M0 2q0-1.500 1.500-1.500h6.500l2.500 2.500H0z" fill="#e6a50a"/><path d="M0 3h23.500q1.500 0 1.500 1.500V21.500H0z" fill="#ffc83d"/><path d="M0 3h10.500L9 5H0z" fill="#e6a50a"/><rect x="4.500" y="14.500" width="15.500" height="7" rx="1.500" fill="#1f86d8"/><rect x="7" y="17.300" width="10.500" height="1.600" rx=".8" fill="#1668b0"/></svg>
<svg style="left:906.500px;top:1043.500px" width="25" height="25" viewBox="0 0 25 25"><defs><linearGradient id="eg1" x1="0" y1="0" x2="1" y2="0"><stop offset="0" stop-color="#2aa5e0"/><stop offset="1" stop-color="#5fdb6a"/></linearGradient><linearGradient id="eg2" x1="0" y1="0" x2="0" y2="1"><stop offset="0" stop-color="#1b8fd8"/><stop offset="1" stop-color="#0b4f9e"/></linearGradient></defs><circle cx="12.500" cy="12.500" r="12" fill="url(#eg2)"/><path d="M.8 11A12 12 0 0 1 24.500 12c0 4-3.500 5.500-6.500 5-3-.5-4-2.500-3-4.500 1-2-1-4.500-4.500-4.500S2 10 .8 11z" fill="url(#eg1)"/><circle cx="12" cy="14" r="3.300" fill="#fff"/><path d="M11 15c1 4 5 6.500 9.500 5.500-2 3-5.500 4.500-9 4-2.500-3-2.500-6-.5-9.500z" fill="#0b4f9e"/><rect x="0" y="16.500" width="12.500" height="8.500" rx="1" fill="#c4680c"/><rect x="0" y="16.500" width="12.500" height="3.500" rx="1" fill="#e08a1a"/><path d="M4 16.500v-1.200q0-.8.800-.8h3q.8 0 .8.800v1.200" stroke="#5a3a14" stroke-width="1" fill="none"/><rect x="5.500" y="19.200" width="1.600" height="1.600" fill="#ffd24a"/></svg>
<div class="a" style="left:943px;top:1036px;width:40px;height:40px;border-radius:4px;background:#eab1ae"></div>
<div class="a" style="left:947px;top:1072px;width:32px;height:3px;border-radius:1.500px;background:#c42b1c"></div>
<svg style="left:950.500px;top:1043.500px" width="24" height="24" viewBox="0 0 24 24"><circle cx="9" cy="3.800" r="3" fill="#7b83eb"/><circle cx="18" cy="6.500" r="2.500" fill="#5059c9"/><rect x="13" y="9.500" width="10" height="11" rx="3.500" fill="#5059c9"/><path d="M4 9h12v9a6 6 0 0 1-12 0z" fill="#7b83eb"/><rect x="0" y="10" width="11" height="11" rx="1.500" fill="#4b53bc"/><path d="M3 13h5M5.500 13v5.500" stroke="#fff" stroke-width="1.500"/></svg>
<div class="a" style="left:964px;top:1038.8px;width:16px;height:16px;border-radius:8px;background:#c42b1c"></div>
<svg style="left:969px;top:1042.300px" width="5" height="9" viewBox="0 0 5 9"><path d="M.5 2.500L3.300.6V9" fill="none" stroke="#fff" stroke-width="1.200"/></svg>
<svg style="left:995.500px;top:1043px" width="23" height="26" viewBox="0 0 23 26"><defs><linearGradient id="rd" x1="0" y1="0" x2="1" y2="1"><stop offset="0" stop-color="#1a2fd0"/><stop offset=".55" stop-color="#3f6bf0"/><stop offset="1" stop-color="#c9dbff"/></linearGradient></defs><path d="M2 1.500l18 1.500-1.500 13.500L.5 14.500z" fill="#c8ccd2"/><path d="M3.200 2.800l15.600 1.300-1.300 11L1.900 13.600z" fill="url(#rd)"/><path d="M7.500 15.500h5v3h-5z" fill="#a8acb2"/><ellipse cx="10.500" cy="20.500" rx="6" ry="2.300" fill="#d9dbde"/><circle cx="16.500" cy="19.800" r="5.400" fill="#e9e9e9" stroke="#8d8d8d" stroke-width=".8"/><path d="M13.700 21.800l2-2-2-1.800M19.300 17.500l-2 2 2 1.900" stroke="#2e8b1e" stroke-width="1.300" fill="none"/></svg>
<svg style="left:1038.500px;top:1043.500px" width="25" height="25" viewBox="0 0 25 25"><circle cx="12.500" cy="12.500" r="11.400" fill="#fff" stroke="#0b5cc0" stroke-width="1.800"/><path d="M19.300 8.600A7.600 7.600 0 1 0 19.300 16.400" fill="none" stroke="#0b5cc0" stroke-width="2.700"/><circle cx="12.500" cy="12.500" r="2.700" fill="#0b5cc0"/><path d="M12.500 12.500H23.500" stroke="#0b5cc0" stroke-width="2"/></svg>
<div class="a" style="left:1079px;top:1037px;width:35px;height:38.5px;border-radius:4px;background:#f8f8f8;border:1px solid #e4e4e4"></div>
<div class="a" style="left:1075.5px;top:1036.5px;width:35px;height:39px;border-radius:4px;background:#f8f8f8;border:1px solid #e4e4e4"></div>
<svg style="left:1082.500px;top:1043.700px" width="24.500" height="24.500" viewBox="0 0 48 48"><circle cx="24" cy="24" r="23" fill="#fff"/><path d="M24 1a23 23 0 0 1 19.920 11.500H24a11.500 11.500 0 0 0-9.960 5.750L4.080 12.500A23 23 0 0 1 24 1z" fill="#ea4335"/><path d="M4.080 12.500l9.960 17.250A11.500 11.500 0 0 0 24 35.500L14.040 47A23 23 0 0 1 4.080 12.500z" fill="#34a853" transform="rotate(0 24 24)"/><path d="M43.920 12.500A23 23 0 0 1 22 47l11.960-17.250A11.500 11.500 0 0 0 33.960 18.250L24 12.500z" fill="#fbbc04"/><path d="M4.080 12.500A23 23 0 0 0 22 47l11.960-17.250A11.500 11.500 0 0 1 14.040 29.750z" fill="#34a853"/><circle cx="24" cy="24" r="10.500" fill="#fff"/><circle cx="24" cy="24" r="8.400" fill="#4285f4"/></svg>
<div class="a" style="left:1087px;top:1072px;width:16px;height:3px;border-radius:1.500px;background:#0f6cbd"></div>
<svg style="left:1126.500px;top:1044.500px" width="24" height="23" viewBox="0 0 24 23"><defs><linearGradient id="ol" x1="0" y1="0" x2="1" y2="1"><stop offset="0" stop-color="#35b8f1"/><stop offset="1" stop-color="#0f5fd0"/></linearGradient></defs><path d="M5 7L13 .8q1-.6 2 0L23 7v11q0 3-3 3H8q-3 0-3-3z" fill="url(#ol)"/><path d="M5 7l9 6 9-6-8-6.200q-1-.6-2 0z" fill="#1a53b8"/><path d="M9 4.500l8.500-2.500 4.500 4-10 6z" fill="#5fc8f8" opacity=".7"/><path d="M5 14l9-3.500L23 14v4q0 3-3 3H8q-3 0-3-3z" fill="#29a7ee"/><rect x="0" y="11" width="11" height="10.500" rx="2" fill="#0f52b8"/><circle cx="5.500" cy="16.200" r="2.700" fill="none" stroke="#fff" stroke-width="1.500"/></svg>
<svg style="left:1170.500px;top:1045px" width="22" height="22" viewBox="0 0 22 22"><rect x="4" y="0" width="18" height="22" rx="2.500" fill="#c44fe0"/><rect x="4" y="0" width="18" height="7.500" rx="2.500" fill="#e78bf5"/><rect x="14" y="7" width="8" height="7.500" fill="#a034c8"/><rect x="4" y="14" width="18" height="8" rx="2.500" fill="#8a25b5"/><rect x="0" y="9.500" width="11.500" height="11.500" rx="2" fill="#7a1fa8"/><path d="M3.200 18.200v-6l5 6v-6" stroke="#fff" stroke-width="1.500" fill="none"/></svg>
<svg style="left:1216.500px;top:1045.500px" width="21" height="20.500" viewBox="0 0 21 20.500"><rect x="0" y="0" width="21" height="20.500" rx="4.500" fill="#2c0b78"/><path d="M0 15h21v1q0 4.500-4.500 4.500h-12Q0 20.500 0 16z" fill="#1d0650"/><circle cx="10.300" cy="10" r="4.300" fill="none" stroke="#fff" stroke-width="2.200"/><path d="M11.500 11.500l3 4.500 1.800-1" stroke="#fff" stroke-width="2" fill="none"/><g fill="#fff"><circle cx="4" cy="4" r=".7"/><circle cx="16.500" cy="4.500" r=".8"/><circle cx="6" cy="16" r=".6"/><circle cx="12" cy="2.800" r=".5"/></g></svg>
<svg style="left:1259px;top:1045px" width="22" height="22" viewBox="0 0 22 22"><rect x="4" y="0" width="18" height="22" rx="2.500" fill="#21a366"/><rect x="4" y="0" width="9" height="7.500" fill="#5fd068"/><rect x="13" y="0" width="9" height="7.500" rx="2" fill="#8be07a"/><rect x="4" y="7.500" width="9" height="7" fill="#28a04a"/><rect x="13" y="7.500" width="9" height="7" fill="#1e8a3c"/><path d="M4 14.500h18v5q0 2.500-2.500 2.500H6.500Q4 22 4 19.500z" fill="#15703a"/><rect x="0" y="9.500" width="11.500" height="11.500" rx="2" fill="#0f6a35"/><path d="M3.200 12.300l5 6M8.200 12.300l-5 6" stroke="#fff" stroke-width="1.500"/></svg>
<svg style="left:1306px;top:1044px" width="18" height="24" viewBox="0 0 18 24"><rect x="0" y="0" width="18" height="24" rx="1.500" fill="#6d7a86"/><rect x="1.800" y="1.800" width="14.400" height="4.600" fill="#45d2ec"/><g fill="#c9d1d8"><rect x="1.800" y="8.200" width="4" height="3.800"/><rect x="7" y="8.200" width="4" height="3.800"/><rect x="12.200" y="8.200" width="4" height="3.800"/><rect x="1.800" y="13.400" width="4" height="3.800"/><rect x="7" y="13.400" width="4" height="3.800"/><rect x="1.800" y="18.600" width="4" height="3.800"/><rect x="7" y="18.600" width="4" height="3.800"/></g><rect x="12.200" y="13.400" width="4" height="9" fill="#0f4a85"/></svg>
<svg style="left:1348px;top:1045px" width="21.500" height="21.500" viewBox="0 0 21.500 21.500"><rect x="0" y="0" width="21.500" height="21.500" rx="3.500" fill="#b30b00"/><path d="M5 16.500c1.500-.5 4-4.500 5-8.500.5-2 .3-3.500-.5-3.500s-1 1.500 0 4c1 2.500 4 6 6.500 6 1.300 0 1.300-1.500 0-1.700-2.500-.4-8 .8-10.500 2.500-1.200.8-1 1.500-.5 1.200z" fill="none" stroke="#fff" stroke-width="1.300"/></svg>
<div class="a" style="left:872px;top:1072px;width:6px;height:2.6px;border-radius:1.300px;background:#8a8a8a"></div>
<div class="a" style="left:915.8px;top:1072px;width:6px;height:2.6px;border-radius:1.300px;background:#8a8a8a"></div>
<div class="a" style="left:1004.3px;top:1072px;width:6px;height:2.6px;border-radius:1.300px;background:#8a8a8a"></div>
<div class="a" style="left:1135.9px;top:1072px;width:6px;height:2.6px;border-radius:1.300px;background:#8a8a8a"></div>
<div class="a" style="left:1179.9px;top:1072px;width:6px;height:2.6px;border-radius:1.300px;background:#8a8a8a"></div>
<div class="a" style="left:1224px;top:1072px;width:6px;height:2.6px;border-radius:1.300px;background:#8a8a8a"></div>
<div class="a" style="left:1267.9px;top:1072px;width:6px;height:2.6px;border-radius:1.300px;background:#8a8a8a"></div>
<div class="a" style="left:1311.9px;top:1072px;width:6px;height:2.6px;border-radius:1.300px;background:#8a8a8a"></div>
<div class="a" style="left:1355.8px;top:1072px;width:6px;height:2.6px;border-radius:1.300px;background:#8a8a8a"></div>
<svg style="left:1699.500px;top:1052.500px" width="11" height="6.500" viewBox="0 0 11 6.500"><path d="M.6 6L5.500 1l4.900 5" fill="none" stroke="#1a1a1a" stroke-width="1.300"/></svg>
<svg style="left:1731px;top:1048px" width="12" height="16.500" viewBox="0 0 12 16.500"><rect x="3.800" y=".7" width="4.400" height="9" rx="2.200" fill="none" stroke="#1a5fb4" stroke-width="1.200"/><path d="M.8 7.500a5.200 5.200 0 0 0 10.400 0M6 12.700v3.200" fill="none" stroke="#1a5fb4" stroke-width="1.200"/></svg>
<svg style="left:1761px;top:1049.500px" width="16" height="12" viewBox="0 0 16 12"><g fill="none" stroke="#1a1a1a" stroke-width="1.100"><path d="M.6 4.300a10.500 10.500 0 0 1 14.800 0"/><path d="M2.800 6.500a7.400 7.400 0 0 1 10.400 0"/><path d="M5 8.600a4.300 4.300 0 0 1 6 0"/></g><circle cx="8" cy="10.600" r="1" fill="#1a1a1a"/></svg>
<svg style="left:1784.500px;top:1049px" width="17" height="14" viewBox="0 0 17 14"><g fill="none" stroke="#1a1a1a" stroke-width="1.100"><path d="M.6 4.600h2.600L6.600 1.400v11.200L3.200 9.400H.6z"/><path d="M9 4.500a3.600 3.600 0 0 1 0 5M11.200 2.800a6.200 6.200 0 0 1 0 8.400M13.400 1a8.800 8.800 0 0 1 0 12"/></g></svg>
<svg style="left:1808.500px;top:1048px" width="21" height="13" viewBox="0 0 21 13"><rect x=".7" y="3.200" width="17.600" height="9.100" rx="2.300" fill="none" stroke="#1a1a1a" stroke-width="1.200"/><rect x="2.200" y="4.700" width="14.600" height="6.100" rx="1" fill="#107c10"/><path d="M19 6.200v3.200" stroke="#1a1a1a" stroke-width="1.600" stroke-linecap="round"/><path d="M10.200 0L7.600 5.200h2.200l-.8 3.500 3.200-5h-2.300z" fill="#1a1a1a" stroke="#eee" stroke-width=".5"/></svg>
<div class="t" style="top:1043.00px;font-size:12px;left:1851.30px;letter-spacing:-0.295px;color:#1a1a1a;">12:44 PM</div>
<div class="t" style="top:1059.00px;font-size:12px;left:1846.00px;letter-spacing:0.102px;color:#1a1a1a;">3/24/2026</div>
</body>
</html>
